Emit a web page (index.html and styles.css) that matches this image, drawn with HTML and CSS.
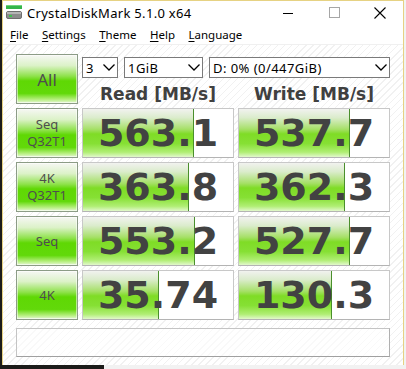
FILE: index.html
```html
<!DOCTYPE html>
<html lang="en">
<head>
    <meta charset="UTF-8">
    <title>CrystalDiskMark 5.1.0 x64</title>
    <link rel="stylesheet" href="styles.css">
</head>
<body>
    <div class="window">
        <div class="titlebar">
            <svg class="app-icon" width="16" height="14" viewBox="0 0 16 14">
                <rect x="0" y="0" width="16" height="4" fill="#35b54a"/>
                <rect x="0" y="0" width="16" height="1" fill="#6fd37c"/>
                <rect x="0.5" y="6.5" width="15" height="7" rx="1.5" fill="#8c8c8c" stroke="#6e6e6e"/>
                <rect x="1" y="7" width="14" height="2" fill="#b5b5b5"/>
                <rect x="3" y="10" width="3" height="2" fill="#3fc24f"/>
            </svg>
            <span class="title">CrystalDiskMark 5.1.0 x64</span>
            <div class="controls">
                <span class="ctl"><svg width="10" height="10" viewBox="0 0 10 10"><line x1="0" y1="5.5" x2="10" y2="5.5" stroke="#000"/></svg></span>
                <span class="ctl"><svg width="11" height="11" viewBox="0 0 11 11"><rect x="0.5" y="0.5" width="10" height="10" fill="none" stroke="#a6a6a6"/></svg></span>
                <span class="ctl"><svg width="12" height="12" viewBox="0 0 12 12"><path d="M0.5 0.5 L11.5 11.5 M11.5 0.5 L0.5 11.5" stroke="#000" stroke-width="1.1"/></svg></span>
            </div>
        </div>

        <div class="menubar">
            <span><u>F</u>ile</span>
            <span><u>S</u>ettings</span>
            <span><u>T</u>heme</span>
            <span><u>H</u>elp</span>
            <span><u>L</u>anguage</span>
        </div>

        <div class="content">
            <div class="board">
                <div class="btn all">All</div>
                <div class="top">
                    <div class="combos">
                        <div class="combo c-count"><span>3</span><svg width="12" height="7" viewBox="0 0 12 7"><path d="M0.5 0.5 L6 6 L11.5 0.5" fill="none" stroke="#000" stroke-width="1.3"/></svg></div>
                        <div class="combo c-size"><span>1GiB</span><svg width="12" height="7" viewBox="0 0 12 7"><path d="M0.5 0.5 L6 6 L11.5 0.5" fill="none" stroke="#000" stroke-width="1.3"/></svg></div>
                        <div class="combo c-drive"><span>D: 0% (0/447GiB)</span><svg width="12" height="7" viewBox="0 0 12 7"><path d="M0.5 0.5 L6 6 L11.5 0.5" fill="none" stroke="#000" stroke-width="1.3"/></svg></div>
                    </div>
                    <div class="heads">
                        <div class="head">Read [MB/s]</div>
                        <div class="head">Write [MB/s]</div>
                    </div>
                </div>

                <div class="btn label">Seq<br>Q32T1</div>
                <div class="cell"><span class="bar" style="width:110px"></span><span class="num">563.1</span></div>
                <div class="cell"><span class="bar" style="width:110px"></span><span class="num">537.7</span></div>

                <div class="btn label">4K<br>Q32T1</div>
                <div class="cell"><span class="bar" style="width:105px"></span><span class="num">363.8</span></div>
                <div class="cell"><span class="bar" style="width:105px"></span><span class="num">362.3</span></div>

                <div class="btn label">Seq</div>
                <div class="cell"><span class="bar" style="width:111px"></span><span class="num">553.2</span></div>
                <div class="cell"><span class="bar" style="width:110px"></span><span class="num">527.7</span></div>

                <div class="btn label">4K</div>
                <div class="cell"><span class="bar" style="width:75px"></span><span class="num">35.74</span></div>
                <div class="cell"><span class="bar" style="width:92px"></span><span class="num">130.3</span></div>

                <div class="comment"></div>
            </div>
        </div>
    </div>
</body>
</html>
```

FILE: styles.css
```css
body {
    margin: 0;
    background: linear-gradient(to right, #1c1c1a 104px, #f2f2f2 104px);
    font-family: "Noto Sans", "Open Sans", sans-serif;
}
.window {
    margin-left: 2px;
    width: 400px;
    height: 363px;
    border: 1px solid #e6d283;
    background: #fff;
    display: flex;
    flex-direction: column;
}
.titlebar {
    height: 21px;
    display: flex;
    align-items: center;
    color: #000;
}
.app-icon {
    margin-left: 3px;
    margin-top: 1px;
}
.title {
    margin-left: 5px;
    padding-top: 2px;
    font-size: 13px;
    letter-spacing: 0.3px;
}
.controls {
    margin-left: auto;
    display: flex;
    height: 21px;
}
.ctl {
    width: 46px;
    display: flex;
    align-items: center;
    justify-content: center;
    padding-top: 2px;
}
.menubar {
    height: 18px;
    padding: 4px 0 0 7px;
    border-bottom: 1px solid #f0f0f0;
    display: flex;
    gap: 13.5px;
    font-size: 11.5px;
    line-height: 18px;
}
.menubar u {
    text-decoration-thickness: 1px;
    text-underline-offset: 2px;
}
.content {
    flex: 1;
    padding: 9px 0 0 13px;
    background: repeating-linear-gradient(135deg, #fff 0 4px, #f1f1f1 4px 5px);
}
.board {
    display: grid;
    grid-template-columns: 62px 152px 152px;
    grid-auto-rows: 50px;
    gap: 4px;
}
.btn {
    box-sizing: border-box;
    border: 1px solid #8c9c86;
    box-shadow: inset 0 0 0 1px rgba(255,255,255,0.55);
    background: linear-gradient(#f6f7f4 0%, #dcf2c8 22%, #8fe24c 44%, #5fd804 54%, #62d90a 80%, #b2ee78 92%, #e6f8d6 100%);
    color: #4e4e4e;
    display: flex;
    align-items: center;
    justify-content: center;
    text-align: center;
}
.all {
    font-size: 17px;
}
.label {
    font-size: 13px;
    line-height: 17px;
}
.top {
    grid-column: span 2;
    display: flex;
    flex-direction: column;
}
.combos {
    margin-top: 3px;
    display: flex;
    gap: 6px;
}
.combo {
    box-sizing: border-box;
    height: 21px;
    border: 1px solid #7a7a7a;
    background: #fff;
    display: flex;
    align-items: center;
    justify-content: space-between;
    padding: 0 2px 0 3px;
    font-size: 13px;
    letter-spacing: 0.45px;
    color: #000;
}
.c-count {
    width: 36px;
}
.c-size {
    width: 79px;
}
.c-drive {
    flex: 1;
}
.heads {
    margin-top: 6px;
    display: grid;
    grid-template-columns: 152px 152px;
    gap: 4px;
}
.head {
    font-family: "DejaVu Sans", Verdana, sans-serif;
    font-weight: bold;
    font-size: 17px;
    line-height: 20px;
    color: #404040;
    text-align: center;
}
.cell {
    position: relative;
    box-sizing: border-box;
    border: 1px solid #c8c8c8;
    border-bottom-color: #b4b4b4;
    background: #fff;
    display: flex;
    align-items: center;
    justify-content: center;
}
.bar {
    position: absolute;
    left: 0;
    top: 0;
    bottom: 0;
    border-right: 1px solid #4a8f2c;
    background: linear-gradient(#f1f2ef 0%, #dbeccc 18%, #a6e068 42%, #7fdc26 52%, #86e034 72%, #b0ee74 90%, #e2f8cc 100%);
}
.num {
    position: relative;
    font-family: "DejaVu Sans", Verdana, sans-serif;
    font-weight: bold;
    font-size: 38px;
    line-height: 48px;
    color: #424242;
}
.comment {
    grid-column: span 3;
    height: 29px;
    margin-top: 4px;
    box-sizing: border-box;
    border: 1px solid #c4c4c4;
    border-bottom-color: #a0a0a0;
    border-right-color: #b0b0b0;
    background: rgba(255,255,255,0.6);
}
```
